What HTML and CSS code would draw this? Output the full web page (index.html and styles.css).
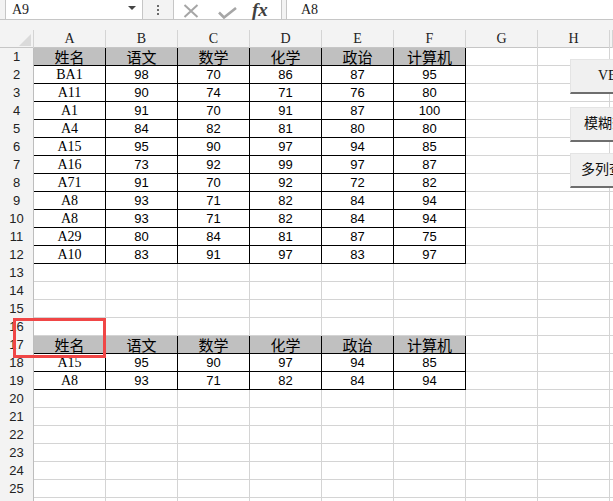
FILE: index.html
```html
<!DOCTYPE html>
<html lang="zh">
<head>
<meta charset="utf-8">
<title>Sheet</title>
<link rel="stylesheet" href="styles.css">
</head>
<body>
<div class="fbar">
  <div class="box namebox"><span class="nb-text">A9</span><svg class="caret" width="8" height="4" viewBox="0 0 8 4"><path d="M0 0H8L4 4Z" fill="#444"/></svg></div>
  <div class="dots"><i></i><i></i><i></i></div>
  <div class="box fxbox">
    <svg class="ic-x" width="16" height="14" viewBox="0 0 16 14"><path d="M1.5 1 L14.5 13 M14.5 1 L1.5 13" stroke="#a6a6a6" stroke-width="2" fill="none"/></svg>
    <svg class="ic-ok" width="19" height="12" viewBox="0 0 19 12"><path d="M1 5.5 L6 10.5 L18 1" stroke="#a6a6a6" stroke-width="2.6" fill="none"/></svg>
    <span class="fx">fx</span>
  </div>
  <div class="box formula">A8</div>
</div>
<div class="band"></div>
<div class="sheet">
  <div class="colhdr">
    <div class="corner"><svg width="12" height="12" viewBox="0 0 12 12"><path d="M12 0V12H0Z" fill="#dadada"/></svg></div>
    <div class="ch">A</div><div class="ch">B</div><div class="ch">C</div><div class="ch">D</div><div class="ch">E</div><div class="ch">F</div><div class="ch">G</div><div class="ch">H</div><div class="ch"></div>
  </div>
  <div class="row"><div class="rh">1</div><div class="c h">姓名</div><div class="c h">语文</div><div class="c h">数学</div><div class="c h">化学</div><div class="c h">政诒</div><div class="c h">计算机</div></div>
  <div class="row"><div class="rh">2</div><div class="c t">BA1</div><div class="c">98</div><div class="c">70</div><div class="c">86</div><div class="c">87</div><div class="c">95</div></div>
  <div class="row"><div class="rh">3</div><div class="c t">A11</div><div class="c">90</div><div class="c">74</div><div class="c">71</div><div class="c">76</div><div class="c">80</div></div>
  <div class="row"><div class="rh">4</div><div class="c t">A1</div><div class="c">91</div><div class="c">70</div><div class="c">91</div><div class="c">87</div><div class="c">100</div></div>
  <div class="row"><div class="rh">5</div><div class="c t">A4</div><div class="c">84</div><div class="c">82</div><div class="c">81</div><div class="c">80</div><div class="c">80</div></div>
  <div class="row"><div class="rh">6</div><div class="c t">A15</div><div class="c">95</div><div class="c">90</div><div class="c">97</div><div class="c">94</div><div class="c">85</div></div>
  <div class="row"><div class="rh">7</div><div class="c t">A16</div><div class="c">73</div><div class="c">92</div><div class="c">99</div><div class="c">97</div><div class="c">87</div></div>
  <div class="row"><div class="rh">8</div><div class="c t">A71</div><div class="c">91</div><div class="c">70</div><div class="c">92</div><div class="c">72</div><div class="c">82</div></div>
  <div class="row"><div class="rh">9</div><div class="c t">A8</div><div class="c">93</div><div class="c">71</div><div class="c">82</div><div class="c">84</div><div class="c">94</div></div>
  <div class="row"><div class="rh">10</div><div class="c t">A8</div><div class="c">93</div><div class="c">71</div><div class="c">82</div><div class="c">84</div><div class="c">94</div></div>
  <div class="row"><div class="rh">11</div><div class="c t">A29</div><div class="c">80</div><div class="c">84</div><div class="c">81</div><div class="c">87</div><div class="c">75</div></div>
  <div class="row"><div class="rh">12</div><div class="c t">A10</div><div class="c">83</div><div class="c">91</div><div class="c">97</div><div class="c">83</div><div class="c">97</div></div>
  <div class="row"><div class="rh">13</div></div>
  <div class="row"><div class="rh">14</div></div>
  <div class="row"><div class="rh">15</div></div>
  <div class="row"><div class="rh">16</div></div>
  <div class="row"><div class="rh">17</div><div class="c h">姓名</div><div class="c h">语文</div><div class="c h">数学</div><div class="c h">化学</div><div class="c h">政诒</div><div class="c h">计算机</div></div>
  <div class="row"><div class="rh">18</div><div class="c t">A15</div><div class="c">95</div><div class="c">90</div><div class="c">97</div><div class="c">94</div><div class="c">85</div></div>
  <div class="row"><div class="rh">19</div><div class="c t">A8</div><div class="c">93</div><div class="c">71</div><div class="c">82</div><div class="c">84</div><div class="c">94</div></div>
  <div class="row"><div class="rh">20</div></div>
  <div class="row"><div class="rh">21</div></div>
  <div class="row"><div class="rh">22</div></div>
  <div class="row"><div class="rh">23</div></div>
  <div class="row"><div class="rh">24</div></div>
  <div class="row"><div class="rh">25</div></div>
  <div class="row"><div class="rh"></div></div>
</div>
<div class="sel"></div>
<div class="btn b1">VBA查询</div>
<div class="btn b2">模糊查询</div>
<div class="btn b3">多列查询</div>
</body>
</html>
```

FILE: styles.css
```css
html, body {
  margin: 0;
  padding: 0;
}
body {
  width: 613px;
  height: 501px;
  overflow: hidden;
  position: relative;
  background: #fff;
  color: #000;
  font-family: "Liberation Sans", "Noto Sans CJK SC", sans-serif;
  font-size: 13px;
}
.fbar {
  height: 20px;
  box-sizing: border-box;
  background: #f3f3f3;
  border-bottom: 1px solid #c6c6c6;
  display: flex;
  align-items: flex-start;
}
.box {
  height: 21px;
  margin-top: -1px;
  box-sizing: border-box;
  border: 1px solid #c6c6c6;
  background: #fff;
}
.namebox {
  margin-left: 5px;
  width: 138px;
  display: flex;
  align-items: center;
  padding-left: 6px;
  font-family: "Liberation Serif", serif;
  font-size: 14px;
  color: #222;
}
.caret {
  margin-left: auto;
  margin-right: 6px;
  margin-bottom: 4px;
}
.dots {
  width: 30px;
  height: 19px;
  display: flex;
  flex-direction: column;
  align-items: center;
  justify-content: center;
  gap: 2px;
}
.dots i {
  width: 2px;
  height: 2px;
  background: #6a6a6a;
}
.fxbox {
  width: 109px;
  display: flex;
  align-items: center;
  padding-left: 9px;
}
.ic-x { margin-top: 2px; }
.ic-ok { margin-left: 19px; margin-top: 6px; }
.fx {
  margin-left: 15px;
  font-family: "Liberation Serif", serif;
  font-style: italic;
  font-weight: bold;
  font-size: 19px;
  color: #404040;
  line-height: 18px;
}
.formula {
  flex: 1;
  margin-left: 4px;
  margin-right: -1px;
  padding-left: 14px;
  font-family: "Liberation Serif", serif;
  font-size: 14px;
  line-height: 19px;
  color: #222;
}
.band {
  height: 10px;
  background: #f3f3f3;
}
.colhdr {
  display: grid;
  grid-template-columns: 34px repeat(8, 72px) 1fr;
  height: 18px;
  box-sizing: border-box;
  background: #f3f3f3;
  border-bottom: 1px solid #c6c6c6;
}
.corner {
  border-right: 1px solid #d4d4d4;
  display: flex;
  align-items: flex-end;
  justify-content: flex-end;
  padding: 0 2px 2px 0;
}
.ch {
  border-right: 1px solid #d4d4d4;
  text-align: center;
  font-family: "Liberation Serif", serif;
  font-size: 14px;
  line-height: 18px;
  color: #222;
}
.row {
  display: grid;
  grid-template-columns: 34px repeat(6, 72px);
  height: 18px;
  background:
    linear-gradient(0deg, #d4d4d4 1px, transparent 1px),
    linear-gradient(90deg, transparent 71px, #d4d4d4 71px) 34px 0 / 72px 100% repeat-x;
}
.rh {
  box-sizing: border-box;
  background: #f3f3f3;
  border-right: 1px solid #bdbdbd;
  border-bottom: 1px solid #d4d4d4;
  text-align: center;
  line-height: 18px;
  font-size: 13px;
  color: #222;
}
.c {
  box-sizing: border-box;
  height: 18px;
  border-right: 1px solid #000;
  border-bottom: 1px solid #000;
  text-align: center;
  line-height: 18px;
  font-size: 13px;
}
.c.t {
  font-family: "Liberation Serif", serif;
  font-size: 14px;
}
.c.h {
  background: #c0c0c0;
  font-family: "Noto Sans CJK SC", sans-serif;
  font-size: 15px;
  line-height: 17px;
}
.sel {
  position: absolute;
  left: 13px;
  top: 318px;
  width: 93px;
  height: 40px;
  box-sizing: border-box;
  border: 3px solid #f04646;
}
.btn {
  position: absolute;
  left: 570px;
  width: 90px;
  height: 35px;
  box-sizing: border-box;
  background: #f0f0f0;
  border-top: 1px solid #e4e4e4;
  border-left: 1px solid #e4e4e4;
  border-bottom: 2px solid #6e6e6e;
  font-family: "Liberation Serif", "Noto Sans CJK SC", serif;
  font-size: 14px;
  line-height: 32px;
  white-space: nowrap;
  color: #111;
}
.b1 { top: 59px; height: 35px; padding-left: 27px; }
.b2 { top: 107px; padding-left: 13px; }
.b3 { top: 153px; padding-left: 10px; }
```
